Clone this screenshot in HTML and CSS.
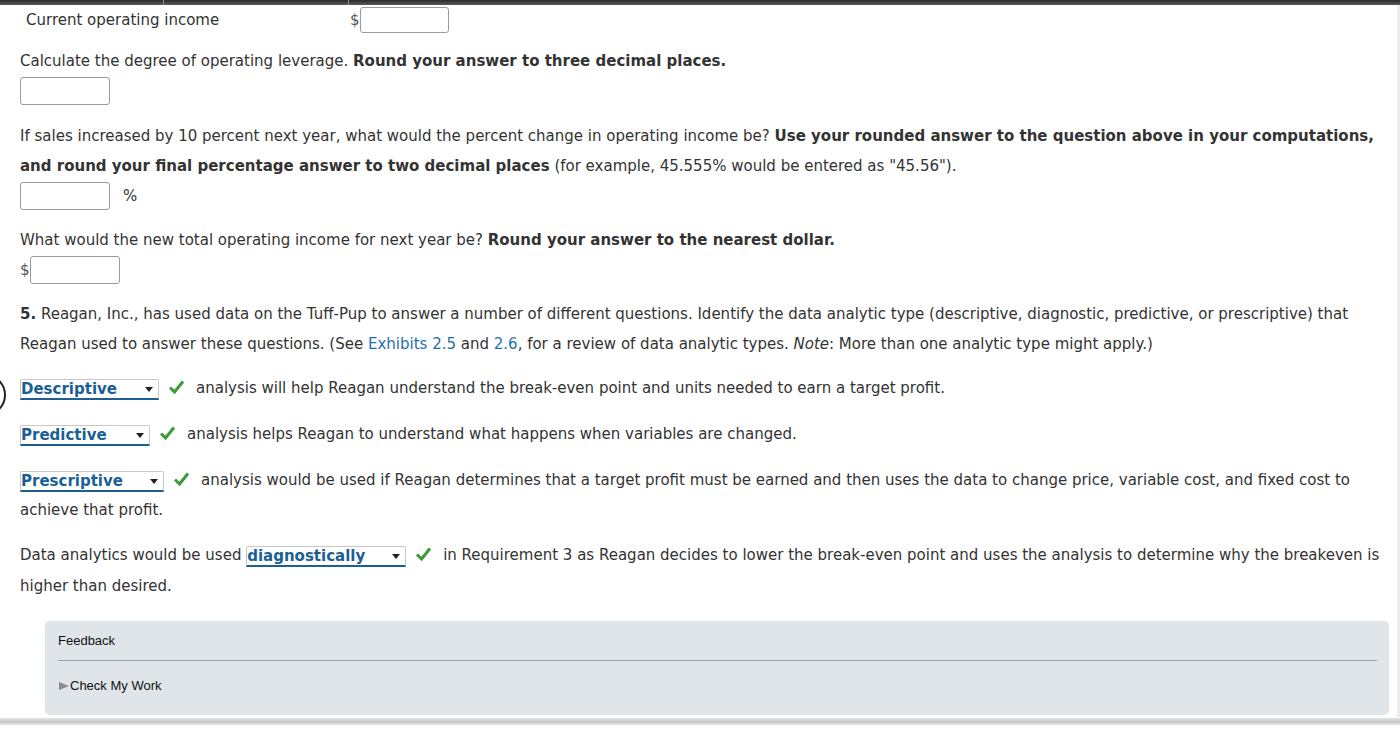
FILE: index.html
```html
<!DOCTYPE html>
<html>
<head>
<meta charset="utf-8">
<link rel="stylesheet" href="styles.css">
</head>
<body>
<div class="topbar">
  <span class="sep sep1"></span>
  <span class="sep sep2"></span>
</div>
<div class="page">
  <div class="arc"></div>
  <div class="content">
    <div class="row-income">
      <div class="cell-label">Current operating income</div>
      <div class="cell-input"><span class="cur">$</span><span class="box box-income"></span></div>
    </div>

    <p class="q q-first">Calculate the degree of operating leverage. <b>Round your answer to three decimal places.</b></p>
    <div class="ans"><span class="box"></span></div>

    <p class="q q-sales">If sales increased by 10 percent next year, what would the percent change in operating income be? <b>Use your rounded answer to the question above in your computations, and round your final percentage answer to two decimal places</b> (for example, 45.555% would be entered as "45.56").</p>
    <div class="ans"><span class="box"></span><span class="pct">%</span></div>

    <p class="q q-new">What would the new total operating income for next year be? <b>Round your answer to the nearest dollar.</b></p>
    <div class="ans"><span class="cur">$</span><span class="box"></span></div>

    <p class="q q-five"><b>5.</b> Reagan, Inc., has used data on the Tuff-Pup to answer a number of different questions. Identify the data analytic type (descriptive, diagnostic, predictive, or prescriptive) that Reagan used to answer these questions. (See <span class="link">Exhibits 2.5</span> and <span class="link">2.6</span>, for a review of data analytic types. <i>Note</i>: More than one analytic type might apply.)</p>

    <p class="q sel-row sel-first"><span class="sel sel-desc">Descriptive<span class="caret"></span></span><svg class="check" width="17" height="16" viewBox="0 0 17 16"><path d="M2 8.5 L6.5 13 L15 2.5" fill="none" stroke="#3b9b3b" stroke-width="3" stroke-linejoin="miter"/></svg>analysis will help Reagan understand the break-even point and units needed to earn a target profit.</p>

    <p class="q sel-row"><span class="sel sel-pred">Predictive<span class="caret"></span></span><svg class="check" width="17" height="16" viewBox="0 0 17 16"><path d="M2 8.5 L6.5 13 L15 2.5" fill="none" stroke="#3b9b3b" stroke-width="3" stroke-linejoin="miter"/></svg>analysis helps Reagan to understand what happens when variables are changed.</p>

    <p class="q sel-row"><span class="sel sel-pres">Prescriptive<span class="caret"></span></span><svg class="check" width="17" height="16" viewBox="0 0 17 16"><path d="M2 8.5 L6.5 13 L15 2.5" fill="none" stroke="#3b9b3b" stroke-width="3" stroke-linejoin="miter"/></svg>analysis would be used if Reagan determines that a target profit must be earned and then uses the data to change price, variable cost, and fixed cost to achieve that profit.</p>

    <p class="q sel-row sel-data">Data analytics would be used <span class="sel sel-diag">diagnostically<span class="caret"></span></span><svg class="check" width="17" height="16" viewBox="0 0 17 16"><path d="M2 8.5 L6.5 13 L15 2.5" fill="none" stroke="#3b9b3b" stroke-width="3" stroke-linejoin="miter"/></svg>in Requirement 3 as Reagan decides to lower the break-even point and uses the analysis to determine why the breakeven is higher than desired.</p>

    <div class="feedback">
      <div class="fb-title">Feedback</div>
      <div class="fb-check"><span class="tri"></span>Check My Work</div>
    </div>
  </div>
  <div class="vscroll"></div>
</div>
<div class="bottombar"></div>
</body>
</html>
```
FILE: styles.css
```css
html, body {
  margin: 0;
  padding: 0;
  background: #ffffff;
}
body {
  font-family: "DejaVu Sans", Verdana, sans-serif;
  font-size: 15px;
  color: #333333;
  width: 1400px;
  height: 745px;
  overflow: hidden;
}
.topbar {
  height: 5px;
  background: linear-gradient(#2a2a2a, #5a5a5a);
  position: relative;
}
.sep {
  position: absolute;
  top: 0;
  width: 1px;
  height: 5px;
  background: #8a8a8a;
}
.sep1 { left: 163px; }
.sep2 { left: 348px; }
.page {
  position: relative;
  display: flex;
  height: 712px;
}
.content {
  flex: 1;
  padding-left: 20px;
  padding-right: 8px;
}
.vscroll {
  width: 3px;
  background: #ececec;
}
.arc {
  position: absolute;
  left: -36px;
  top: 369px;
  width: 38px;
  height: 38px;
  border: 2px solid #222;
  border-radius: 50%;
}
.row-income {
  display: flex;
  align-items: center;
  height: 27px;
  padding-top: 1px;
}
.cell-label {
  width: 324px;
  padding-left: 6px;
}
.cell-input {
  display: flex;
  align-items: center;
}
.cur {
  color: #555;
}
.box {
  display: inline-block;
  width: 88px;
  height: 25px;
  border: 1px solid #9a9a9a;
  border-radius: 3px;
  background: #fff;
  box-sizing: border-box;
}
.box-income {
  width: 89px;
  height: 26px;
}
.q {
  margin: 14px 0 0 0;
  line-height: 30px;
}
.q-first {
  margin-top: 13px;
}
.q-sales { margin-top: 16px; }
.q-new { margin-top: 15px; }
.q-five { margin-top: 15px; }
.ans {
  display: flex;
  align-items: center;
  height: 29px;
  margin-top: 0;
}
.ans .box {
  width: 90px;
  height: 28px;
}
.pct {
  margin-left: 13px;
}
b {
  font-weight: bold;
  color: #333;
}
.link {
  color: #1f6fb2;
}
.sel-row {
  margin-top: 16px;
}
.sel-first {
  margin-top: 14px;
}
.sel-data {
  margin-top: 15px;
  line-height: 31px;
}
.sel {
  display: inline-block;
  position: relative;
  font-weight: bold;
  color: #1a5f96;
  background: #fff;
  line-height: 18px;
  height: 18px;
  border: 1px solid #c8c8c8;
  border-bottom: 2px solid #1c5f94;
  border-radius: 2px 2px 0 0;
  padding: 0 22px 0 0;
  vertical-align: -1px;
  box-sizing: content-box;
}
.sel-desc { width: 115px; }
.sel-pred { width: 106px; }
.sel-pres { width: 120px; }
.sel-diag { width: 136px; }
.caret {
  position: absolute;
  right: 5px;
  top: 7px;
  width: 0;
  height: 0;
  border-left: 4px solid transparent;
  border-right: 4px solid transparent;
  border-top: 5px solid #222;
}
.check {
  vertical-align: -2px;
  margin: 0 11px 0 9px;
}
.feedback {
  margin: 19px 0 0 25px;
  background: #dfe5e8;
  border-radius: 5px;
  height: 94px;
  padding: 0 12px 0 13px;
  font-family: "Liberation Sans", Arial, sans-serif;
  font-size: 13px;
  color: #111;
}
.fb-title {
  padding-top: 11px;
  box-sizing: border-box;
  line-height: 17px;
  border-bottom: 1px solid #9a9fa2;
  padding-bottom: 10px;
  height: 40px;
}
.fb-check {
  margin-top: 17px;
  display: flex;
  align-items: center;
}
.tri {
  display: inline-block;
  width: 0;
  height: 0;
  border-top: 4px solid transparent;
  border-bottom: 4px solid transparent;
  border-left: 10px solid #8a8a8a;
  margin: 0 1px 0 1px;
}
.bottombar {
  position: absolute;
  left: 0;
  top: 718px;
  width: 1400px;
  height: 7px;
  background: linear-gradient(#e2e2e2, #c8c8c8 60%, #e8e8e8);
}
```
